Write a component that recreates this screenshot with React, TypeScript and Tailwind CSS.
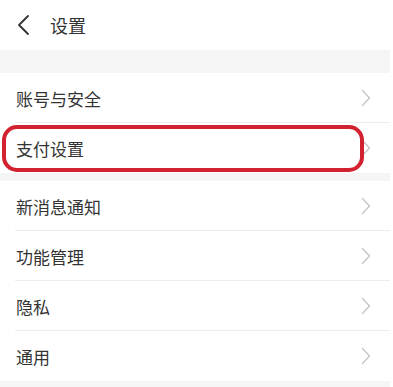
import React from "react";

const groupA = ["账号与安全", "支付设置"];
const groupB = ["新消息通知", "功能管理", "隐私", "通用"];

function Chevron() {
  return (
    <svg width="10" height="18" viewBox="0 0 10 18" fill="none" className="shrink-0">
      <path d="M1.5 1.5 L8.5 9 L1.5 16.5" stroke="#c4c4c4" strokeWidth="1.3" strokeLinecap="round" strokeLinejoin="round" />
    </svg>
  );
}

function Row({ label, last }: { label: string; last?: boolean }) {
  return (
    <div className="relative flex h-[50px] items-center justify-between pl-4 pr-[19px] bg-white">
      <span className="text-[17px] text-[#333] leading-none">{label}</span>
      <Chevron />
      {!last && <div className="absolute bottom-0 left-[15px] right-0 h-px bg-[#ececec]" />}
    </div>
  );
}

export default function App() {
  return (
    <div
      className="w-[393px] h-[387px] overflow-hidden bg-white"
      style={{ fontFamily: '"Noto Sans CJK SC", "Noto Sans", sans-serif' }}
    >
      <div className="w-[390px] bg-[#f5f5f5] h-full">
        {/* Header */}
        <div className="flex h-[50px] items-center bg-white pl-[17px]">
          <svg width="14" height="22" viewBox="0 0 14 22" fill="none">
            <path d="M11 2 L2 11 L11 20" stroke="#333" strokeWidth="1.8" strokeLinecap="round" strokeLinejoin="round" />
          </svg>
          <span className="ml-[19px] text-[18px] text-[#333]">设置</span>
        </div>

        <div className="h-[23px]" />

        <div className="relative">
          {groupA.map((l, i) => (
            <Row key={l} label={l} last={i === groupA.length - 1} />
          ))}
          {/* highlight annotation */}
          <div className="absolute left-[2px] top-[52px] w-[362px] h-[47px] rounded-[15px] border-4 border-[#d3222f]" />
        </div>

        <div className="h-[8px]" />

        <div>
          {groupB.map((l, i) => (
            <Row key={l} label={l} last={i === groupB.length - 1} />
          ))}
        </div>
      </div>
    </div>
  );
}
